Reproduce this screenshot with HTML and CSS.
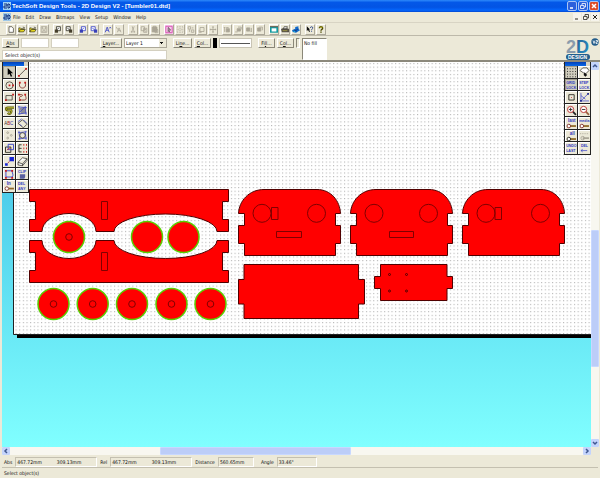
FILE: index.html
```html
<!DOCTYPE html>
<html lang="en">
<head>
<meta charset="utf-8">
<title>TechSoft Design Tools</title>
<link rel="stylesheet" href="styles.css">
</head>
<body>
<div class="window">
  <header class="titlebar">
    <svg class="app-icon" viewBox="0 0 8 8"><rect width="8" height="8" fill="#9fd0f4"/><path d="M1 2h3v2H1v2h3M5 2v4h1l1-1V3L6 2z" class="i-navy"/></svg>
    <h1 class="title">TechSoft Design Tools - 2D Design V2 - [Tumbler01.dtd]</h1>
    <button class="win-btn" aria-label="Minimize"><svg viewBox="0 0 8 8"><path d="M2 6h3" class="i-white"/></svg></button>
    <button class="win-btn" aria-label="Restore"><svg viewBox="0 0 8 8"><path d="M3 3V1.500h3.500V5H5M1.500 3.500H5v3H1.500z" class="i-white thin"/></svg></button>
    <button class="win-btn close" aria-label="Close"><svg viewBox="0 0 8 8"><path d="M2 2l4 4M6 2L2 6" class="i-white"/></svg></button>
  </header>

  <nav class="menubar">
    <svg class="app-icon" viewBox="0 0 8 8"><rect width="8" height="8" fill="#9fc8e8"/><path d="M1 2h3v2H1v2h3M5 2v4h1l1-1V3L6 2z" class="i-navy"/></svg>
    <button>File</button><button>Edit</button><button>Draw</button><button>Bitmaps</button><button>View</button><button>Setup</button><button>Window</button><button>Help</button>
    <span class="mdi">
      <button aria-label="Minimize document"><svg viewBox="0 0 8 8"><path d="M2 6h3" class="i-dark"/></svg></button>
      <button aria-label="Restore document"><svg viewBox="0 0 8 8"><path d="M3 3V1.500h3.500V5H5M1.500 3.500H5v3H1.500z" class="i-dark thin"/></svg></button>
      <button aria-label="Close document"><svg viewBox="0 0 8 8"><path d="M2 2l4 4M6 2L2 6" class="i-dark"/></svg></button>
    </span>
  </nav>

  <div class="toolbar">
    <div class="group">
      <button aria-label="New"><svg viewBox="0 0 10 10"><path d="M2.500 1.500h3.500l2 2v5H2.500z" fill="#fff" class="i-dark thin"/></svg></button>
      <button aria-label="Open"><svg viewBox="0 0 10 10"><path d="M1 8V3h2l1 1h3v1M1 8l2-3h6L7 8z" fill="#e8d820" class="i-dark thin"/><path d="M6 2l2 .5V4" class="i-dark thin"/></svg></button>
      <button aria-label="Open part"><svg viewBox="0 0 10 10"><path d="M1 8V3h2l1 1h3v1M1 8l2-3h6L7 8z" fill="#e8d820" class="i-dark thin"/><path d="M6 2l2 .5V4" class="i-dark thin"/></svg></button>
      <button aria-label="Save"><svg viewBox="0 0 10 10"><path d="M1.500 1.500h7v7h-7zM3 1.500v3h4v-3M3.500 8.500v-2h3v2" class="i-gray"/></svg></button>
    </div>
    <div class="group">
      <button aria-label="Import"><svg viewBox="0 0 10 10"><path d="M3 1.500h5v5H3z" fill="#fff" class="i-dark"/><path d="M1 5h4v4H1z" fill="#463f2c"/><path d="M4 5l2-2" class="i-dark"/></svg></button>
      <button aria-label="Export"><svg viewBox="0 0 10 10"><path d="M1.500 1.500h5v5h-5z" fill="#fff" class="i-dark"/><path d="M5 5h4v4H5z" fill="#463f2c"/><path d="M3 3l3 3" class="i-dark"/></svg></button>
    </div>
    <div class="group">
      <button aria-label="Import bitmap"><svg viewBox="0 0 10 10"><path d="M3 1.500h5v5H3z" fill="#fff" class="i-blue"/><path d="M1 5h4v4H1z" fill="#3840b8"/><path d="M4 5l2-2" class="i-blue"/></svg></button>
      <button aria-label="Export bitmap"><svg viewBox="0 0 10 10"><path d="M1.500 1.500h5v5h-5z" fill="#fff" class="i-blue"/><path d="M5 5h4v4H5z" fill="#3840b8"/><path d="M3 3l3 3" class="i-blue"/></svg></button>
    </div>
    <div class="group">
      <button aria-label="Undo all"><svg viewBox="0 0 10 10"><path d="M1.500 8.500L4 2l2.500 6.500M2.500 6h3M7 2l1.500 1.500M8.500 2L7 3.500" class="i-blue"/></svg></button>
      <button aria-label="Redo all"><svg viewBox="0 0 10 10"><path d="M1.500 2l2 3M3 8.500L5 3l2.500 5.500M4 6.500h3" class="i-gray"/></svg></button>
    </div>
    <div class="group">
      <button aria-label="Cut"><svg viewBox="0 0 10 10"><path d="M4 1l1.500 5.500M6.500 1L4.500 6.500M3 7h1v1.500H3zM6 7h1v1.500H6z" class="i-gray"/></svg></button>
      <button aria-label="Copy"><svg viewBox="0 0 10 10"><path d="M1.500 1.500h4v5h-4zM4.500 3.500h4v5h-4zM5.500 5h2M5.500 7h2" class="i-gray"/></svg></button>
      <button aria-label="Paste"><svg viewBox="0 0 10 10"><path d="M1.500 2h6v6h-6z" fill="#aaa596"/><path d="M1.500 2h6v6h-6zM3 1h3v2H3zM5 5h3.500v4H5z" class="i-gray"/></svg></button>
    </div>
    <div class="group">
      <button aria-label="Select mode" class="lit"><svg viewBox="0 0 10 10"><path d="M1 1h8v8H1z" class="i-pink"/><path d="M4 2.500v5l1-1 1 2M4 2.500l3 3H5" class="i-dark thin"/></svg></button>
      <button aria-label="Group"><svg viewBox="0 0 10 10"><path d="M1.500 1.500h7v7h-7zM3.500 3.500h3v3h-3z" class="i-gray dash"/></svg></button>
      <button aria-label="Ungroup"><svg viewBox="0 0 10 10"><path d="M1.500 1.500h3v3h-3zM5.500 5.500h3v3h-3zM3 5v3M6 3h2" class="i-gray"/></svg></button>
      <button aria-label="Rotate"><svg viewBox="0 0 10 10"><path d="M2.500 2.500h5v5h-5zM1.500 5.500v3h3" class="i-gray"/></svg></button>
      <button aria-label="Move"><svg viewBox="0 0 10 10"><path d="M5 1v8M1 5h8M4 2h2M4 8h2M2 4v2M8 4v2" class="i-gray"/></svg></button>
    </div>
    <div class="group">
      <button aria-label="Bring to front"><svg viewBox="0 0 10 10"><path d="M4 4h4v4H4z" fill="#aaa596"/><path d="M2 2v6M1 3l1-1 1 1M4 2.500h3M4 4h4v4H4z" class="i-gray"/></svg></button>
      <button aria-label="Bring forward"><svg viewBox="0 0 10 10"><path d="M4 4h4v3H4z" fill="#aaa596"/><path d="M1.500 8h3M4 4h4v3H4zM5 2h4v3" class="i-gray"/></svg></button>
      <button aria-label="Send backward"><svg viewBox="0 0 10 10"><path d="M2 3h4v4H2z" fill="#aaa596"/><path d="M2 3h4v4H2zM8 3v5M7 7l1 1" class="i-gray"/></svg></button>
      <button aria-label="Send to back"><svg viewBox="0 0 10 10"><path d="M2 3h4v4H2z" fill="#aaa596"/><path d="M2 3h4v4H2zM4 2h4v4" class="i-gray"/></svg></button>
    </div>
    <div class="group">
      <button aria-label="Print preview"><svg viewBox="0 0 10 10"><rect x="0" y="2" width="10" height="7" fill="#109aa0"/><rect x="2" y="3.500" width="6" height="4" fill="#fff"/><path d="M0 1.500h10" class="i-dark"/></svg></button>
      <button aria-label="Print"><svg viewBox="0 0 10 10"><path d="M0 4.500l2-1h6l2 1v4H1z" fill="#555047"/><path d="M3 4l1-2.500h4L7 4z" fill="#eee" class="i-dark thin"/><path d="M2 6.500h6" stroke="#d6c943" stroke-width=".7"/></svg></button>
      <button aria-label="Plot"><svg viewBox="0 0 10 10"><path d="M0 6l4-2V2l4-1v3l2 2-5 3-4-1z" fill="#126ccc"/><path d="M2 6h3l3-2M5 8V6" class="i-navy"/><path d="M2 7l2 .5" stroke="#20d8e8"/></svg></button>
    </div>
    <div class="group">
      <button aria-label="Context help"><svg viewBox="0 0 10 10"><path d="M1 1v6l1.500-1.500L4 8l1-.5L3.800 5H5z" fill="#111"/><path d="M5.500 3c0-2 3-2 3 0C8.500 4.300 7 4 7 6M7 7v1" class="i-navy"/></svg></button>
      <button aria-label="Help"><svg viewBox="0 0 10 10"><path d="M3 3.500c0-2.500 4-2.500 4 0C7 5 5 4.500 5 6.500M5 7.500v1.500" stroke="#4e4b00" stroke-width="1.800" fill="none"/><path d="M3.500 3c.5-1.500 3-1.500 3 0" stroke="#e7df12" stroke-width=".7" fill="none"/></svg></button>
    </div>
  </div>

  <section class="options">
    <div class="fields">
      <div class="coords">
        <button class="push"><u>A</u>bs</button>
        <input class="num" aria-label="X value">
        <input class="num" aria-label="Y value">
        <button class="push layer-btn"><u>L</u>ayer...</button>
        <select class="layer" aria-label="Layer"><option>Layer 1</option></select>
      </div>
      <input class="prompt" aria-label="Prompt" value="Select object(s)">
    </div>
    <div class="style-row">
      <button class="push line-btn">Li<u>n</u>e...</button>
      <button class="push"><u>C</u>ol...</button>
      <span class="swatch black"></span>
      <span class="line-sample"></span>
      <button class="push fill-btn">Fi<u>l</u>l...</button>
      <button class="push">C<u>o</u>l...</button>
      <span class="swatch"></span>
    </div>
    <div class="fill-sample">No fill</div>
    <svg class="logo" viewBox="0 0 34 26" role="img" aria-label="2D Design">
      <defs><linearGradient id="lg" x2="1" y2="1"><stop stop-color="#2a5f96"/><stop offset="1" stop-color="#2496c8"/></linearGradient></defs>
      <text x="1" y="17" class="logo-big" fill="#8b9bab">2</text>
      <text x="11" y="17" class="logo-big" fill="url(#lg)">D</text>
      <rect x="1" y="18" width="24" height="6" rx="3" fill="#225f8c"/>
      <text x="3" y="23" class="logo-small">DESIGN</text>
      <circle cx="30" cy="6" r="3.700" fill="#235c8a"/><path d="M28 4.500l1 3 1-3M31 4.500h1.500V6H31v1.500h1.500" class="i-white thin"/>
    </svg>
  </section>

  <main class="workspace">
    <div class="canvas">
      <svg class="drawing" role="img" aria-label="Drawing">
        <defs>
          <pattern id="dots" width="3.650" height="3.650" patternUnits="userSpaceOnUse"><rect x="1" y="1" width="1" height="1" fill="#a4a4a4"/></pattern>
          <path id="face" d="M238.500 213.500C239 201 249 189.500 264 189.500H317C331 189.500 340 201 340.500 213.500H335.500V225.500H340.500V243.500H335.500V255.500H244.500V243.500H238.500V225.500H244.500V213.500z"/>
          <g id="wheel"><circle r="15.500" class="cut"/></g>
          <g id="hubwheel"><use href="#wheel"/><circle r="3.300" class="inner"/></g>
        </defs>
        <g transform="translate(-2 -62)">
          <rect x="17" y="66" width="3000" height="272" fill="#000"/>
          <rect x="14" y="61" width="3000" height="273.500" fill="#fff"/>
          <rect x="14" y="61" width="3000" height="273" fill="url(#dots)"/>
          <path d="M13.500 61V334.500H3000" class="edge"/>
          <g class="part">
            <path d="M29.500 189.500H228.500V201.500H222.500V219.500H228.500V231.500H217A51.500 17.500 0 0 0 114 231.500H96A27 18 0 0 0 42 231.500H29.500V219.500H35.500V201.500H29.500z"/>
            <path d="M29.500 240.500H42A27 18 0 0 0 96 240.500H114A51.500 18 0 0 0 217 240.500H228.500V252.500H222.500V270.500H228.500V282.500H29.500V270.500H35.500V252.500H29.500z"/>
            <path d="M101.500 201.500h6v18h-6zM101.500 252.500h6v18h-6z" class="inner"/>
            <use href="#hubwheel" x="69" y="237"/><use href="#wheel" x="147" y="237"/><use href="#wheel" x="183.500" y="237"/>
            <use href="#hubwheel" x="53.500" y="304"/><use href="#hubwheel" x="92.700" y="304"/><use href="#hubwheel" x="132" y="304"/><use href="#hubwheel" x="171.500" y="304"/><use href="#hubwheel" x="210.500" y="304"/>
            <use href="#face"/><use href="#face" x="112"/><use href="#face" x="224"/>
            <g class="inner">
              <circle cx="262" cy="213.300" r="9"/><circle cx="316.500" cy="213.300" r="9"/>
              <circle cx="374" cy="213.300" r="9"/><circle cx="428.500" cy="213.300" r="9"/>
              <circle cx="486" cy="213.300" r="9"/><circle cx="540.500" cy="213.300" r="9"/>
              <path d="M271.500 207.500h6.500v12h-6.500zM495 207.500h6.500v12H495zM276.500 231.500h25v6h-25zM389.500 231.500h24v6h-24z"/>
            </g>
            <path d="M244 264.500H358.500V279.500H364.500V304H358.500V318.500H244V304H238.500V279.500H244z"/>
            <path d="M380.500 264.500H447V276.500H452.500V288.500H447V300.500H380.500V288.500H374.500V276.500H380.500z"/>
            <circle cx="389.500" cy="274.500" r="1"/><circle cx="406.500" cy="274.500" r="1"/><circle cx="389.500" cy="291" r="1"/><circle cx="406.500" cy="291" r="1"/>
          </g>
        </g>
      </svg>

      <div class="palette left">
        <div class="palette-title"><span></span></div>
        <div class="tools tools-10">
          <button class="on" aria-label="Select"><svg viewBox="0 0 12 12"><path d="M4 1v8l2-1.500L7.500 11 9 10.500 7.500 7H10z" fill="#000"/></svg></button>
          <button aria-label="Line"><svg viewBox="0 0 12 12"><path d="M2 10l8-8" class="i-dark thin"/><path d="M1 9h2v2H1zM9 1h2v2H9z" class="r"/></svg></button>
          <button aria-label="Circle"><svg viewBox="0 0 12 12"><circle cx="6" cy="6" r="4" class="i-dark thin"/><path d="M5 5h2v2H5zM9 5h2v2H9z" class="r"/></svg></button>
          <button aria-label="Arc"><svg viewBox="0 0 12 12"><path d="M3 3C0 11 12 11 9 3" class="i-brown"/><path d="M2 2h2v2H2zM8 2h2v2H8z" class="r"/></svg></button>
          <button aria-label="Rectangle"><svg viewBox="0 0 12 12"><path d="M2 4h7v5H2z" class="i-dark thin"/><path d="M1 8h2v2H1zM9 2h2v2H9z" class="r"/></svg></button>
          <button aria-label="Curve"><svg viewBox="0 0 12 12"><path d="M2 3h3C7 3 6 5 4 5S2 9 5 9h3c3 0 2-3 1-6" class="i-brown"/><path d="M1 2h2v2H1zM8 2h2v2H8zM2 8h2v2H2z" class="r"/></svg></button>
          <button aria-label="Path"><svg viewBox="0 0 12 12"><path d="M11 3H4C1 3 2 6 4 6h4c1 3-2 5-4 3" stroke="#4d4d00" stroke-width="2.500" fill="none"/><path d="M11 3H4C1 3 2 6 4 6h4c1 3-2 5-4 3" stroke="#c4c030" fill="none"/></svg></button>
          <button aria-label="Fill shape"><svg viewBox="0 0 12 12"><path d="M3 3l6-1 1 7-6 1z" fill="#8c8c98"/><path d="M1 2l10 1M9 1l1 10M2 1l1 10M1 10l10-1M3 8l5-5" class="i-blue thin"/></svg></button>
          <button aria-label="Text"><svg viewBox="0 0 12 12"><text x="0" y="8" class="abc"><tspan fill="#333">A</tspan><tspan fill="#b02020">B</tspan><tspan fill="#3030a0">C</tspan></text></svg></button>
          <button aria-label="Dimension"><svg viewBox="0 0 12 12"><path d="M1 6l5-4 5 5-4 4z" class="i-dark thin"/><path d="M1 4l4-3M7 2l4 4M3 7l2 2" class="i-blue thin"/></svg></button>
          <button aria-label="Points"><svg viewBox="0 0 12 12"><g class="i-gray"><circle cx="4" cy="3" r="1"/><circle cx="8" cy="6" r="1"/><circle cx="4" cy="9" r="1"/></g></svg></button>
          <button aria-label="Transform"><svg viewBox="0 0 12 12"><path d="M1 3l10-1M9 1l1 10M2 1l1 10M1 10l10-1" class="i-blue thin"/><circle cx="6" cy="6" r="3" class="i-dark thin"/></svg></button>
          <button aria-label="Duplicate"><svg viewBox="0 0 12 12"><path d="M1.500 4.500h6v6h-6z" class="i-dark"/><path d="M4.500 1.500h6v6h-6z" class="i-blue"/><path d="M3 8l4-3" class="i-red"/></svg></button>
          <button aria-label="Mirror"><svg viewBox="0 0 12 12"><path d="M5 2H2v8h3M2 6h3" class="i-dark"/><path d="M7 1h1v2H7zM7 5h1v2H7zM7 9h1v2H7zM10 1h1v2h-1zM10 5h1v2h-1zM10 9h1v2h-1z" class="r"/></svg></button>
          <button aria-label="Scale"><svg viewBox="0 0 12 12"><path d="M6 1h5v5H6zM1 8h3v3H1z" fill="#1625d4"/><path d="M4 8l2-2" class="i-red"/></svg></button>
          <button aria-label="Delete part"><svg viewBox="0 0 12 12"><path d="M1 7l5-5 5 1-5 6zM1 7v3l5 1 5-6V3M6 9v2" fill="#fff" class="i-dark thin"/></svg></button>
          <button aria-label="Edit path"><svg viewBox="0 0 12 12"><path d="M2 2h7c0 4 2 4 0 7H2z" class="i-blue"/><path d="M1 1h2v2H1zM8 1h2v2H8zM1 9h2v2H1zM8 9h2v2H8z" class="r"/></svg></button>
          <button aria-label="Clipboard"><svg viewBox="0 0 12 12"><text x="1" y="5" class="lbl small">CLIP</text><path d="M3 6h6v3L8 11H3z" fill="#5960a0"/></svg></button>
          <button aria-label="Zoom in"><svg viewBox="0 0 12 12"><text x="3" y="5" class="lbl">In</text><path d="M5 8.500h6" stroke="#8f6a28" stroke-width="2"/><circle cx="3" cy="8.500" r="2" fill="#fff" class="i-brown"/></svg></button>
          <button aria-label="Delete any"><svg viewBox="0 0 12 12"><text x="1" y="5" class="lbl small">DEL</text><text x="1" y="10" class="lbl small">ANY</text></svg></button>
        </div>
      </div>

      <div class="palette right">
        <div class="palette-title"><span></span></div>
        <div class="tools tools-7">
          <button class="on" aria-label="Grid"><svg viewBox="0 0 12 12"><path d="M1 2h11M1 5h11M1 8h11M1 11h11" stroke="#111" stroke-dasharray="1 2" fill="none"/></svg></button>
          <button aria-label="Pen"><svg viewBox="0 0 12 12"><path d="M1 4l3-3h5l2 3-4 4z" fill="#fff" class="i-dark thin"/><path d="M6 6l3 3-2 2-2-2z" fill="#111"/></svg></button>
          <button class="on" aria-label="Grid lock"><svg viewBox="0 0 12 12"><text x="0" y="5" class="lbl small">GRID</text><text x="0" y="10" class="lbl small">LOCK</text></svg></button>
          <button aria-label="Step lock"><svg viewBox="0 0 12 12"><text x="0" y="5" class="lbl small">STEP</text><text x="0" y="10" class="lbl small">LOCK</text></svg></button>
          <button aria-label="Attach"><svg viewBox="0 0 12 12"><path d="M3 3h6v6H3z" class="i-dark"/><path d="M5.500 5.500h1v1h-1z" class="r"/></svg></button>
          <button aria-label="Radial lock"><svg viewBox="0 0 12 12"><path d="M2 1v9h9M2 10l8-8M2 4l5 4" class="i-blue thin"/><path d="M9 1h2v2H9zM1 9h2v2H1z" fill="#202a90"/></svg></button>
          <button aria-label="Magnify"><svg viewBox="0 0 12 12"><path d="M7 7l4 4" stroke="#222" stroke-width="2"/><circle cx="5" cy="5" r="3.500" fill="#fff" class="i-red"/><path d="M3 5h4M5 3v4" class="i-dark"/></svg></button>
          <button aria-label="Reduce"><svg viewBox="0 0 12 12"><path d="M7 7l4 4" stroke="#9b6040" stroke-width="2"/><circle cx="5" cy="5" r="3.500" fill="#fff" class="i-red"/><path d="M3 5h4" class="i-dark"/></svg></button>
          <button aria-label="Zoom last"><svg viewBox="0 0 12 12"><text x="2" y="5" class="lbl">last</text><path d="M4 9h7" stroke="#8f6a28" stroke-width="2"/><circle cx="3" cy="9" r="2" fill="#fff" class="i-brown"/></svg></button>
          <button aria-label="Zoom media"><svg viewBox="0 0 12 12"><text x="0" y="5" class="lbl small">media</text><path d="M4 9h7" stroke="#8f6a28" stroke-width="2"/><circle cx="3" cy="9" r="2" fill="#fff" class="i-brown"/></svg></button>
          <button aria-label="Zoom all"><svg viewBox="0 0 12 12"><text x="4" y="5" class="lbl">all</text><path d="M4 9h7" stroke="#8f6a28" stroke-width="2"/><circle cx="3" cy="9" r="2" fill="#fff" class="i-dark"/></svg></button>
          <button aria-label="Zoom objects"><svg viewBox="0 0 12 12"><path d="M1 3h9" class="i-gray dash"/><path d="M4 8h7" stroke="#aaa596" stroke-width="2"/><circle cx="4" cy="8" r="2" fill="#777" class="i-gray"/></svg></button>
          <button aria-label="Undo last"><svg viewBox="0 0 12 12"><text x="0" y="5" class="lbl small">UNDO</text><text x="0" y="10" class="lbl small">LAST</text></svg></button>
          <button aria-label="Delete back"><svg viewBox="0 0 12 12"><text x="2" y="5" class="lbl small">DEL</text><path d="M2 8.500h7M4 7L2 8.500 4 10" class="i-blue thin"/></svg></button>
        </div>
      </div>
    </div>
    <div class="vscroll">
      <button aria-label="Scroll up"><svg viewBox="0 0 8 8"><path d="M2 5l2-2 2 2" class="i-arrow"/></svg></button>
      <div class="vtrack"><div class="thumb"></div></div>
      <button aria-label="Scroll down"><svg viewBox="0 0 8 8"><path d="M2 3l2 2 2-2" class="i-arrow"/></svg></button>
    </div>
    <div class="hscroll">
      <button aria-label="Scroll left"><svg viewBox="0 0 8 8"><path d="M5 2L3 4l2 2" class="i-arrow"/></svg></button>
      <div class="htrack"><div class="thumb"></div></div>
      <button aria-label="Scroll right"><svg viewBox="0 0 8 8"><path d="M3 2l2 2-2 2" class="i-arrow"/></svg></button>
    </div>
  </main>

  <div class="readout">
    <span>Abs</span><span class="panel pair"><span>467.72mm</span><span>309.13mm</span></span>
    <span>Rel</span><span class="panel pair"><span>467.72mm</span><span>309.13mm</span></span>
    <span>Distance</span><span class="panel dist">560.65mm</span>
    <span class="angle-label">Angle</span><span class="panel angle">33.46°</span>
  </div>
  <footer class="status">Select object(s)</footer>
</div>
</body>
</html>
```
FILE: styles.css
```css
* { box-sizing: border-box; }

body {
  margin: 0;
  font-family: "DejaVu Sans Condensed", "Liberation Sans", sans-serif;
  font-size: 5px;
  line-height: 8px;
  color: #111;
}

button, input, select {
  font: inherit;
  color: inherit;
  margin: 0;
  padding: 0;
  border: 0;
  border-radius: 0;
  background: none;
}

svg { display: block; }

.window {
  display: flex;
  flex-direction: column;
  height: 100vh;
  background: #ece9d8;
  overflow: hidden;
}

/* title bar */
.titlebar {
  display: flex;
  align-items: center;
  height: 12px;
  flex: none;
  gap: 1px;
  padding: 0 1px 0 3px;
  background: linear-gradient(#2e8afa, #0458e8 20%, #0354e4 60%, #0566fc 85%, #0448d0);
}
.app-icon { width: 8px; height: 8px; flex: none; }
.title {
  flex: 1;
  margin: 0;
  font: bold 6px/10px "Liberation Sans", sans-serif;
  color: #fff;
  white-space: nowrap;
}
.win-btn {
  width: 10px;
  height: 10px;
  border: 1px solid #a8c4f4;
  border-radius: 2px;
  background: #2c60dc;
}
.win-btn.close { background: #dc4c28; }

/* menus */
.menubar {
  display: flex;
  align-items: center;
  height: 10px;
  flex: none;
  gap: 5px;
  padding: 0 1px 0 3px;
}
.menubar > .app-icon { margin-right: -3px; }
.mdi { display: flex; gap: 1px; margin-left: auto; }
.mdi button { width: 8px; height: 8px; background: #f6f4ec; }

/* icon bar */
.toolbar {
  display: flex;
  align-items: center;
  height: 13px;
  flex: none;
  gap: 4px;
  padding-left: 6px;
  border-top: 1px solid #d8d4c4;
}
.group { display: flex; gap: 1px; }
.group button {
  width: 10px;
  height: 11px;
  border: 1px solid;
  border-color: #fff #aca899 #aca899 #fff;
}
.group svg { width: 100%; height: 100%; overflow: visible; }
.group .lit { background: #f8c8ec; }

/* options strip */
.options {
  display: flex;
  align-items: flex-start;
  flex: none;
  height: 27px;
  gap: 6px;
  padding: 2px 1px 0 2px;
  border-top: 1px solid #bdb9aa;
  border-bottom: 2px solid #8c897c;
}
.fields { display: flex; flex-direction: column; gap: 2px; width: 165px; }
.coords { display: flex; gap: 2px; }
.push {
  height: 10px;
  width: 17px;
  border: 1px solid;
  border-color: #fff #8a8778 #8a8778 #fff;
  line-height: 8px;
}
.num { width: 28px; height: 10px; background: #fff; border: 1px solid #d4d0c0; }
.layer-btn { width: 22px; margin-left: auto; }
.layer {
  appearance: none;
  width: 43px;
  height: 10px;
  padding-left: 1px;
  border: 1px solid #aca899;
  line-height: 8px;
  background:
    linear-gradient(to bottom right, #111 50%, transparent 50%) right 2px center / 2px 2px no-repeat,
    linear-gradient(to bottom left, #111 50%, transparent 50%) right 4px center / 2px 2px no-repeat,
    linear-gradient(#ece9d8, #ece9d8) right / 7px 100% no-repeat,
    #fff;
}
.prompt { width: 100%; height: 10px; padding-left: 2px; background: #fff; border: 1px solid #d4d0c0; }
.style-row { display: flex; gap: 2px; }
.line-btn { width: 19px; }
.swatch { width: 4px; height: 10px; border: 1px solid; border-color: #8a8778 #fff #fff #8a8778; }
.swatch.black { background: #000; border-color: #000; }
.line-sample {
  width: 33px;
  height: 10px;
  border: 1px solid #c8c4b4;
  background: linear-gradient(#555, #555) center / 29px 1px no-repeat, #fff;
}
.fill-btn { margin-left: 4px; }
.fill-sample {
  width: 25px;
  height: 22px;
  margin-left: -4px;
  padding-left: 1px;
  background: #fff;
  border: 1px solid;
  border-color: #8a8778 #fff #fff #8a8778;
}
.logo { width: 34px; height: 26px; margin-left: auto; margin-top: -2px; overflow: visible; }
.logo-big { font: bold 18px "Liberation Sans", sans-serif; }
.logo-small { font: bold 5px "Liberation Sans", sans-serif; fill: #fff; }

/* drawing area */
.workspace {
  flex: 1;
  min-height: 0;
  display: grid;
  grid-template: 1fr 8px / 1fr 8px;
  padding: 0 1px 0 2px;
}
.canvas {
  position: relative;
  overflow: hidden;
  background: linear-gradient(#34b4e0, #80ffff);
}
.drawing { width: 100%; height: 100%; }
.edge { fill: none; stroke: #222; }
.part { fill: #f00; stroke: #500000; }
.cut { stroke: #58d000; stroke-width: 1.5; }
.inner { fill: none; stroke: #800000; }

/* floating tool palettes */
.palette {
  position: absolute;
  top: 0;
  width: 27px;
  padding: 0 1px 1px;
  background: #222;
}
.palette.left { left: 0; }
.palette.right { right: 0; }
.palette-title {
  display: flex;
  justify-content: flex-end;
  height: 4px;
  background: linear-gradient(#0340b8, #0868e8);
}
.palette-title span { width: 4px; background: #d8d4c4; }
.tools {
  display: grid;
  grid-template-columns: 1fr 1fr;
  grid-auto-rows: 1fr;
  gap: 1px;
}
.tools-10 { height: 126px; }
.tools-7 { height: 88px; }
.tools button { min-height: 0; background: #ece9d8; border: solid #fff; border-width: 1px 0 0 1px; }
.tools .on { background: #d0cdbe; border-color: #a09c8c; }
.tools svg { width: 100%; height: 100%; overflow: visible; }
.lbl { font: bold 5px "Liberation Sans", sans-serif; fill: #3038c0; }
.lbl.small { font-size: 4px; }
.abc { font: 5px "Liberation Sans", sans-serif; }

/* scroll bars */
.vscroll, .hscroll { display: flex; background: #f8f7f0; }
.vscroll { flex-direction: column; }
.vscroll button, .hscroll button { width: 8px; height: 8px; flex: none; background: #c4d4fc; border-radius: 1px; }
.vtrack { flex: 1; display: flex; flex-direction: column; padding: 160px 0 72px; }
.htrack { flex: 1; padding: 0 232px 0 150px; }
.thumb { flex: 1; height: 100%; border-radius: 1px; background: #bccdf8; border: 1px solid #c8d8ff; }

/* status rows */
.readout {
  display: flex;
  align-items: center;
  flex: none;
  height: 12px;
  gap: 3px;
  padding: 1px 4px 0;
}
.panel {
  display: flex;
  align-items: center;
  height: 10px;
  padding-left: 1px;
  border: 1px solid;
  border-color: #c4c0b0 #fff #fff #c4c0b0;
}
.pair { width: 82px; }
.pair span { flex: 1; }
.dist { width: 36px; }
.angle-label { margin-left: 4px; }
.angle { width: 40px; }
.status {
  flex: none;
  height: 11px;
  margin: 0 2px;
  padding: 1px 2px 0;
  border-top: 1px solid #c4c0b0;
}

/* icon strokes */
.i-white { stroke: #fff; fill: none; stroke-width: 1.5; }
.i-dark { stroke: #2a2820; stroke-width: 1; }
path.i-dark:not([fill]), circle.i-dark:not([fill]) { fill: none; }
.i-navy { stroke: #14307c; fill: none; stroke-width: 1; }
.i-blue { stroke: #3540c8; stroke-width: 1; }
path.i-blue:not([fill]) { fill: none; }
.i-brown { stroke: #803028; stroke-width: 1; }
path.i-brown { fill: none; }
.i-red { stroke: #b82828; stroke-width: 1; }
.i-pink { stroke: #d048a8; fill: none; }
.i-gray { stroke: #aaa596; fill: none; stroke-width: 1; }
.i-arrow { stroke: #405890; fill: none; stroke-width: 1.5; }
.r { fill: #c81c1c; }
.thin { stroke-width: 0.8; }
.dash { stroke-dasharray: 1 1; }
```
